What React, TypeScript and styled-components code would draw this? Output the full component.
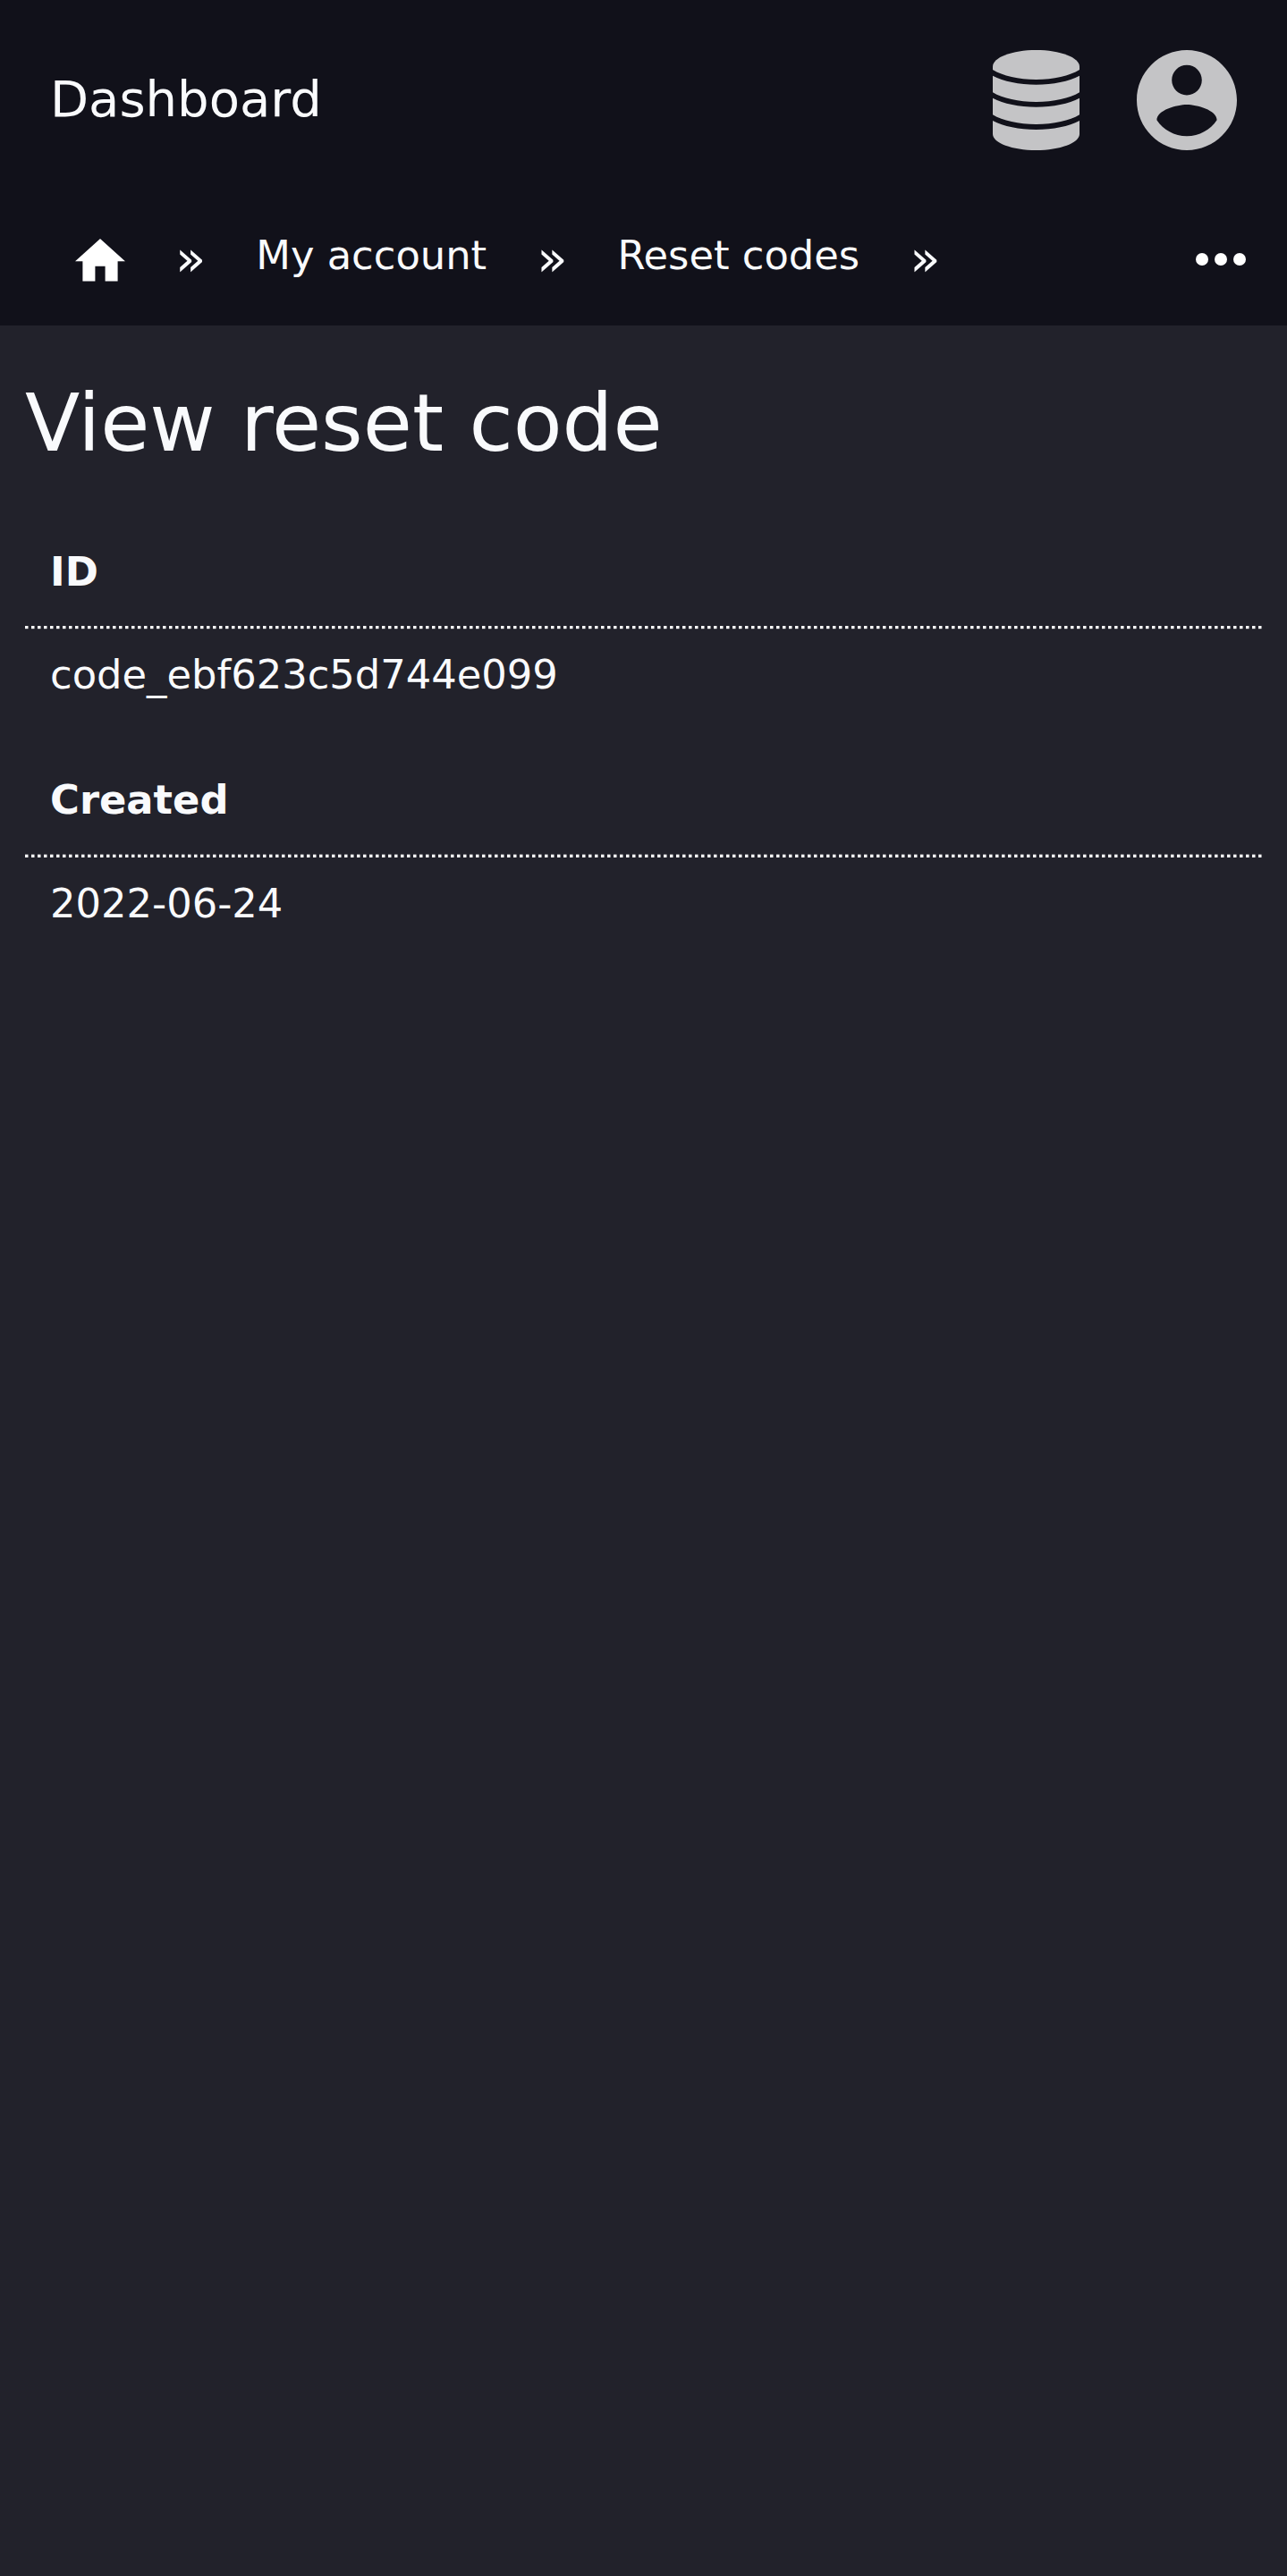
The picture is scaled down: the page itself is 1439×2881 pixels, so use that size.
import React from "react";
import styled, { createGlobalStyle } from "styled-components";

const GlobalStyle = createGlobalStyle`
  html {
    font-size: 56px;
  }
  body {
    margin: 0;
    background: #22222b;
    color: #f9fafc;
    font-family: "DejaVu Sans", sans-serif;
  }
`;

const Page = styled.div`
  display: flex;
  flex-direction: column;
  min-height: 2881px;
`;

const Header = styled.header`
  background: #11111a;
`;

const TopBar = styled.div`
  display: flex;
  align-items: center;
  justify-content: space-between;
  box-sizing: border-box;
  height: 224px;
  padding: 0 56px;
`;

const Brand = styled.a`
  font-size: 56px;
  line-height: 65px;
  padding-bottom: 3px;
`;

const Actions = styled.div`
  display: flex;
  align-items: center;
  gap: 56px;
  color: #c4c4c6;
`;

const ActionIcon = styled.a`
  display: flex;
  width: 112px;
  height: 112px;

  svg {
    width: 100%;
    height: 100%;
  }
`;

const Breadcrumbs = styled.nav`
  display: flex;
  align-items: flex-start;
  box-sizing: border-box;
  height: 140px;
  padding: 28px 32px 0 84px;
`;

const HomeLink = styled.a`
  display: flex;
  padding-top: 15.2px;
  color: #fff;

  svg {
    width: 56px;
    height: 47.6px;
  }
`;

const Separator = styled.span`
  margin: 4px 56px 0;
  font-size: 56px;
  line-height: 65px;
`;

const Crumb = styled.a`
  font-size: 44.8px;
  line-height: 67px;
  white-space: nowrap;
`;

const MoreButton = styled.a`
  display: flex;
  margin-left: auto;
  margin-top: -3.6px;
  color: #fff;

  svg {
    width: 84px;
    height: 84px;
  }
`;

const Main = styled.main`
  padding: 56px 28px;
`;

const Title = styled.h1`
  margin: 0;
  font-size: 89.6px;
  font-weight: 400;
  line-height: 106px;
`;

const Details = styled.dl`
  margin: 56px 0 0;
`;

const Entry = styled.div`
  height: 255.5px;
`;

const Label = styled.dt`
  height: 117.9px;
  padding: 27.75px 28px 0;
  box-sizing: border-box;
  font-size: 44.8px;
  font-weight: 700;
  line-height: 59px;
`;

const Rule = styled.div<{ $soft: "top" | "bottom" }>`
  height: 4px;
  background: repeating-linear-gradient(
    to right,
    #fff 0 3px,
    rgba(255, 255, 255, 0.5) 3px 4px,
    transparent 4px 7px
  );
  mask-image: linear-gradient(
    to ${({ $soft }) => $soft},
    #000 0 3px,
    rgba(0, 0, 0, ${({ $soft }) => ($soft === "top" ? 0.35 : 0.2)}) 3px 4px
  );
`;

const Value = styled.dd`
  margin: 0;
  padding: 20.2px 28px 0;
  font-size: 44.8px;
  line-height: 61px;
`;

const details = [
  { label: "ID", value: "code_ebf623c5d744e099", soft: "bottom" as const },
  { label: "Created", value: "2022-06-24", soft: "top" as const },
];

const DatabaseIcon = () => (
  <svg viewBox="0 0 112 112" fill="currentColor">
    <path d="M7 18.5C7 8.2 28.7 0 55.5 0S104 8.2 104 18.5V22C93 28.8 75 33 55.5 33S18 28.8 7 22z" />
    <path d="M7 28.7C19 35 36.5 38.7 55.5 38.7S92 35 104 28.7V47.3C93 54 75 58 55.5 58S18 54 7 47.3z" />
    <path d="M7 53.7C19 60 36.5 63.7 55.5 63.7S92 60 104 53.7V72.3C93 79 75 83 55.5 83S18 79 7 72.3z" />
    <path d="M7 79C19 85.3 36.5 89 55.5 89S92 85.3 104 79V94C104 103.8 82.3 112 55.5 112S7 103.8 7 94z" />
  </svg>
);

const AccountIcon = () => (
  <svg viewBox="2 2 20 20" fill="currentColor">
    <path d="M12 2C6.48 2 2 6.48 2 12s4.48 10 10 10 10-4.48 10-10S17.52 2 12 2zm0 3c1.66 0 3 1.34 3 3s-1.34 3-3 3-3-1.34-3-3 1.34-3 3-3zm0 14.2c-2.5 0-4.71-1.28-6-3.22.03-1.99 4-3.08 6-3.08 1.99 0 5.97 1.09 6 3.08-1.29 1.94-3.5 3.22-6 3.22z" />
  </svg>
);

const HomeIcon = () => (
  <svg viewBox="2 3 20 17" fill="currentColor">
    <path d="M10 20v-6h4v6h5v-8h3L12 3 2 12h3v8z" />
  </svg>
);

const MoreIcon = () => (
  <svg viewBox="0 0 24 24" fill="currentColor">
    <circle cx="6" cy="12" r="2" />
    <circle cx="12" cy="12" r="2" />
    <circle cx="18" cy="12" r="2" />
  </svg>
);

export default function App() {
  return (
    <Page>
      <GlobalStyle />
      <Header>
        <TopBar>
          <Brand>Dashboard</Brand>
          <Actions>
            <ActionIcon><DatabaseIcon /></ActionIcon>
            <ActionIcon><AccountIcon /></ActionIcon>
          </Actions>
        </TopBar>
        <Breadcrumbs>
          <HomeLink><HomeIcon /></HomeLink>
          <Separator>»</Separator>
          <Crumb>My account</Crumb>
          <Separator>»</Separator>
          <Crumb>Reset codes</Crumb>
          <Separator>»</Separator>
          <MoreButton><MoreIcon /></MoreButton>
        </Breadcrumbs>
      </Header>
      <Main>
        <Title>View reset code</Title>
        <Details>
          {details.map(({ label, value, soft }) => (
            <Entry key={label}>
              <Label>{label}</Label>
              <Rule $soft={soft} />
              <Value>{value}</Value>
            </Entry>
          ))}
        </Details>
      </Main>
    </Page>
  );
}
